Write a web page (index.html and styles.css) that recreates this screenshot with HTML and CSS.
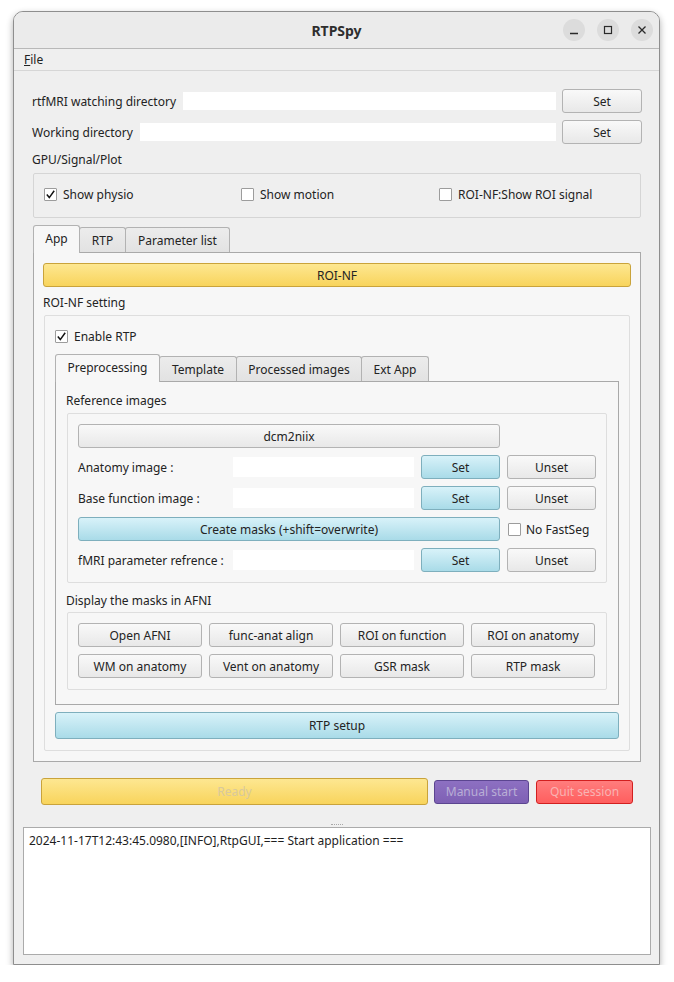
FILE: index.html
```html
<!DOCTYPE html>
<html>
<head>
<meta charset="utf-8">
<title>RTPSpy</title>
<link rel="stylesheet" href="styles.css">
</head>
<body>
<div class="window">
  <div class="titlebar">
    <div></div>
    <div class="title">RTPSpy</div>
    <div class="wbtns">
      <span class="wbtn"><svg width="22" height="22" viewBox="0 0 22 22"><path d="M7 14.5h8" stroke="#2a2a2a" stroke-width="1.3"/></svg></span>
      <span class="wbtn"><svg width="22" height="22" viewBox="0 0 22 22"><rect x="7.5" y="7.5" width="7" height="7" fill="none" stroke="#2a2a2a" stroke-width="1.2"/></svg></span>
      <span class="wbtn"><svg width="22" height="22" viewBox="0 0 22 22"><path d="M7.5 7.5l7 7M14.5 7.5l-7 7" stroke="#2a2a2a" stroke-width="1.3"/></svg></span>
    </div>
  </div>
  <div class="menubar"><span class="menu"><span class="ul">F</span>ile</span></div>

  <div class="main">
    <div class="dirrow">
      <span class="lbl">rtfMRI watching directory</span>
      <div class="input"></div>
      <div class="btn set">Set</div>
    </div>
    <div class="dirrow">
      <span class="lbl">Working directory</span>
      <div class="input"></div>
      <div class="btn set">Set</div>
    </div>
    <div class="seclabel s1">GPU/Signal/Plot</div>
    <div class="group gpu">
      <div class="chk"><span class="box on"><svg width="11" height="11" viewBox="0 0 11 11"><path d="M1.8 5.6L4.3 8.6L9.2 1.8" fill="none" stroke="#111" stroke-width="1.5"/></svg></span>Show physio</div>
      <div class="chk"><span class="box"></span>Show motion</div>
      <div class="chk"><span class="box"></span>ROI-NF:Show ROI signal</div>
    </div>

    <div class="tabbar">
      <div class="tab sel t-app">App</div>
      <div class="tab t-rtp">RTP</div>
      <div class="tab t-par">Parameter list</div>
    </div>
    <div class="pane outer">
      <div class="btn yellow roinf">ROI-NF</div>
      <div class="seclabel s2">ROI-NF setting</div>
      <div class="group roigroup">
        <div class="chk enable"><span class="box on"><svg width="11" height="11" viewBox="0 0 11 11"><path d="M1.8 5.6L4.3 8.6L9.2 1.8" fill="none" stroke="#111" stroke-width="1.5"/></svg></span>Enable RTP</div>
        <div class="tabbar inner">
          <div class="tab sel t-pre">Preprocessing</div>
          <div class="tab t-tem">Template</div>
          <div class="tab t-proc">Processed images</div>
          <div class="tab t-ext">Ext App</div>
        </div>
        <div class="pane innerpane">
          <div class="seclabel s3">Reference images</div>
          <div class="group refgroup">
            <div class="btn span3">dcm2niix</div>
            <div class="cell"></div>

            <span class="lbl">Anatomy image :</span>
            <div class="input"></div>
            <div class="btn blue">Set</div>
            <div class="btn">Unset</div>

            <span class="lbl">Base function image :</span>
            <div class="input"></div>
            <div class="btn blue">Set</div>
            <div class="btn">Unset</div>

            <div class="btn blue span3">Create masks (+shift=overwrite)</div>
            <div class="chk nofs"><span class="box"></span>No FastSeg</div>

            <span class="lbl">fMRI parameter refrence :</span>
            <div class="input"></div>
            <div class="btn blue">Set</div>
            <div class="btn">Unset</div>
          </div>
          <div class="seclabel s4">Display the masks in AFNI</div>
          <div class="group maskgroup">
            <div class="btn">Open AFNI</div>
            <div class="btn">func-anat align</div>
            <div class="btn">ROI on function</div>
            <div class="btn">ROI on anatomy</div>
            <div class="btn">WM on anatomy</div>
            <div class="btn">Vent on anatomy</div>
            <div class="btn">GSR mask</div>
            <div class="btn">RTP mask</div>
          </div>
        </div>
        <div class="btn blue rtpsetup">RTP setup</div>
      </div>
    </div>
  </div>

  <div class="runrow">
    <div class="btn yellow ready">Ready</div>
    <div class="btn purple manual">Manual start</div>
    <div class="btn red quit">Quit session</div>
  </div>
  <div class="splitter"><span class="dots"></span></div>
  <div class="log">2024-11-17T12:43:45.0980,[INFO],RtpGUI,=== Start application ===</div>
</div>
</body>
</html>
```
FILE: styles.css
```css
html, body {
  margin: 0;
  padding: 0;
  background: #ffffff;
}
body {
  font-family: "Noto Sans", "DejaVu Sans", sans-serif;
  font-size: 12px;
  color: #232323;
}
.window {
  margin: 11px 0 0 13px;
  width: 647px;
  height: 954px;
  box-sizing: border-box;
  border: 1px solid #8e8e8e;
  border-radius: 10px 10px 0 0;
  background: #efefef;
  box-shadow: 0 3px 7px rgba(0, 0, 0, 0.32);
  display: flex;
  flex-direction: column;
  overflow: hidden;
}
.titlebar {
  flex: none;
  height: 36px;
  background: #ebebeb;
  border-bottom: 1px solid #b8b8b8;
  display: grid;
  grid-template-columns: 1fr auto 1fr;
  align-items: center;
}
.title {
  font-weight: bold;
  font-size: 14px;
  color: #2e2e2e;
}
.wbtns {
  display: flex;
  justify-content: flex-end;
  gap: 12px;
  padding-right: 6px;
}
.wbtn {
  width: 22px;
  height: 22px;
  border-radius: 50%;
  background: #dcdcdc;
  display: block;
}
.wbtn svg { display: block; }
.menubar {
  flex: none;
  height: 21px;
  border-bottom: 1px solid #d6d6d6;
  display: flex;
  align-items: center;
  padding-left: 10px;
}
.menu { color: #222; }
.ul { text-decoration: underline; }

.main {
  padding: 18px 18px 0 18px;
}
.lbl { white-space: nowrap; }
.dirrow {
  display: flex;
  align-items: center;
  height: 24px;
  margin-bottom: 7px;
  margin-right: -1px;
}
.dirrow .input {
  flex: 1;
  height: 18px;
  background: #fff;
  margin: 0 6px 0 7px;
}
.btn {
  box-sizing: border-box;
  height: 24px;
  border: 1px solid #b3b3b3;
  border-radius: 3px;
  background: linear-gradient(#f9f9f9, #e8e8e8);
  display: flex;
  align-items: center;
  justify-content: center;
  white-space: nowrap;
  color: #232323;
}
.btn.set { width: 80px; }
.btn.blue {
  background: linear-gradient(#d8f2f9, #a9dbe8);
  border-color: #7eafbd;
}
.btn.yellow {
  background: linear-gradient(#fde791, #f8d45c);
  border-color: #c9a33b;
}
.btn.purple {
  background: linear-gradient(#8d70c2, #7e60b4);
  border-color: #5b4590;
  color: #b9aed6;
}
.btn.red {
  background: linear-gradient(#ff7d7d, #ff5e5e);
  border-color: #d21f1f;
  color: #f9b3b3;
}
.seclabel {
  line-height: 18px;
  margin-top: 6px;
  margin-bottom: 4px;
}
.group {
  border: 1px solid #d5d5d5;
  border-radius: 2px;
  box-sizing: border-box;
}
.gpu {
  margin-left: 1px;
  height: 45px;
  display: grid;
  grid-template-columns: 197px 198px 1fr;
  align-items: center;
  padding-left: 10px;
  padding-bottom: 2px;
}
.chk {
  display: flex;
  align-items: center;
  white-space: nowrap;
}
.box {
  width: 13px;
  height: 13px;
  box-sizing: border-box;
  border: 1px solid #9c9c9c;
  border-radius: 1px;
  background: #fff;
  margin-right: 6px;
  display: flex;
  align-items: center;
  justify-content: center;
  flex: none;
}
.box svg { display: block; }

.tabbar {
  display: flex;
  align-items: flex-start;
  height: 28px;
  margin: 7px 0 -1px 1px;
  position: relative;
  z-index: 1;
}
.tab {
  box-sizing: border-box;
  height: 25px;
  margin-top: 2px;
  border: 1px solid #b2b2b2;
  border-bottom: none;
  border-radius: 3px 3px 0 0;
  background: linear-gradient(#ececec, #e2e2e2);
  display: flex;
  align-items: center;
  justify-content: center;
  margin-left: -1px;
}
.tab:first-child { margin-left: 0; }
.tab.sel {
  height: 28px;
  margin-top: 0;
  background: #f7f7f7;
  position: relative;
  z-index: 2;
  padding-bottom: 2px;
}
.t-app { width: 47px; }
.t-rtp { width: 47px; }
.t-par { width: 105px; }
.t-pre { width: 105px; }
.t-tem { width: 78px; }
.t-proc { width: 126px; }
.t-ext { width: 68px; }

.pane {
  border: 1px solid #a9a9a9;
  background: #f7f7f7;
  box-sizing: border-box;
}
.outer {
  margin-left: 1px;
  padding: 10px 9px 10px 9px;
}
.roinf { height: 24px; }
.s2 { margin-top: 7px; margin-bottom: 3px; }
.roigroup {
  margin: 0 1px;
  padding: 11px 10px 11px 10px;
  border-color: #dedede;
}
.enable { height: 18px; }
.tabbar.inner { margin: 9px 0 -1px 0; }
.innerpane {
  padding: 10px 10px 14px 10px;
}
.s3 { margin-top: 0; margin-bottom: 3px; }
.refgroup {
  margin: 0 1px;
  padding: 10px 10px 10px 10px;
  display: grid;
  grid-template-columns: 148px 181px 79px 89px;
  column-gap: 7px;
  row-gap: 7px;
  align-items: center;
  border-color: #dedede;
}
.refgroup .input {
  height: 20px;
  background: #fff;
}
.span3 { grid-column: span 3; }
.nofs { padding-left: 1px; }
.nofs .box { margin-right: 5px; }
.s4 { margin-top: 9px; margin-bottom: 2px; }
.maskgroup {
  margin: 0 1px;
  padding: 10px 10px 11px 10px;
  display: grid;
  grid-template-columns: repeat(4, 124px);
  column-gap: 7px;
  row-gap: 7px;
  border-color: #dedede;
}
.rtpsetup {
  height: 27px;
  margin-top: 7px;
}

.runrow {
  display: flex;
  align-items: center;
  padding: 0 26px 0 27px;
  margin-top: 16px;
  gap: 6px;
}
.ready {
  width: 387px;
  height: 27px;
  color: #d8c99c;
}
.manual { width: 95px; }
.quit { width: 97px; margin-left: 1px; }
.splitter {
  height: 22px;
  display: flex;
  justify-content: center;
  align-items: flex-end;
  padding-bottom: 2px;
  box-sizing: border-box;
}
.dots {
  width: 12px;
  border-top: 1px dotted #a8a8a8;
}
.log {
  flex: 1;
  margin: 0 8px 9px 9px;
  background: #fff;
  border: 1px solid #ababab;
  padding: 4px 5px 3px 5px;
  line-height: 18px;
  color: #1e1e1e;
}
```
